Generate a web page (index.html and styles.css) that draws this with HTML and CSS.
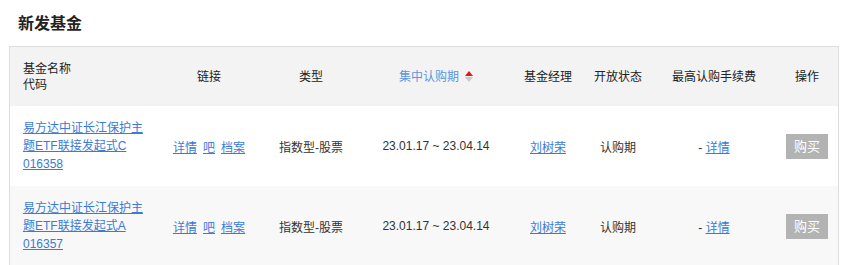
FILE: index.html
```html
<!DOCTYPE html>
<html lang="zh-CN">
<head>
<meta charset="utf-8">
<title>新发基金</title>
<link rel="stylesheet" href="styles.css">
</head>
<body>
<div class="page">
  <h2 class="title">新发基金</h2>
  <div class="table-wrap">
    <table class="fund-table">
      <colgroup>
        <col class="c1"><col class="c2"><col class="c3"><col class="c4">
        <col class="c5"><col class="c6"><col class="c7"><col class="c8">
      </colgroup>
      <thead>
        <tr>
          <th class="name">基金名称<br>代码</th>
          <th>链接</th>
          <th>类型</th>
          <th class="sorted"><span class="sort-label">集中认购期</span><span class="sort-arrows"><i class="up"></i><i class="down"></i></span></th>
          <th>基金经理</th>
          <th>开放状态</th>
          <th>最高认购手续费</th>
          <th>操作</th>
        </tr>
      </thead>
      <tbody>
        <tr>
          <td class="name"><a href="#">易方达中证长江保护主题ETF联接发起式C</a><br><a href="#">016358</a></td>
          <td class="links"><a href="#">详情</a><a href="#">吧</a><a href="#">档案</a></td>
          <td>指数型-股票</td>
          <td>23.01.17 ~ 23.04.14</td>
          <td><a href="#">刘树荣</a></td>
          <td>认购期</td>
          <td>- <a href="#">详情</a></td>
          <td><span class="buy">购买</span></td>
        </tr>
        <tr class="alt">
          <td class="name"><a href="#">易方达中证长江保护主题ETF联接发起式A</a><br><a href="#">016357</a></td>
          <td class="links"><a href="#">详情</a><a href="#">吧</a><a href="#">档案</a></td>
          <td>指数型-股票</td>
          <td>23.01.17 ~ 23.04.14</td>
          <td><a href="#">刘树荣</a></td>
          <td>认购期</td>
          <td>- <a href="#">详情</a></td>
          <td><span class="buy">购买</span></td>
        </tr>
      </tbody>
    </table>
  </div>
</div>
</body>
</html>
```

FILE: styles.css
```css
html, body {
  margin: 0;
  padding: 0;
  background: #fff;
}
body {
  font-family: "Liberation Sans", "Noto Sans CJK SC", sans-serif;
  font-size: 12px;
  color: #333;
}
.page {
  padding: 0 10px 0 9px;
}
.title {
  margin: 12px 0 10px 9px;
  font-size: 16px;
  line-height: 24px;
  font-weight: bold;
  color: #222;
}
.table-wrap {
  width: 828px;
  border: 1px solid #ddd;
}
.fund-table {
  width: 828px;
  table-layout: fixed;
  border-collapse: collapse;
  border-spacing: 0;
}
.c1 { width: 146px; }
.c2 { width: 106px; }
.c3 { width: 98px; }
.c4 { width: 152px; }
.c5 { width: 72px; }
.c6 { width: 68px; }
.c7 { width: 124px; }
.c8 { width: 62px; }

.fund-table th,
.fund-table td {
  padding: 0;
  text-align: center;
  vertical-align: middle;
  font-weight: normal;
}
.fund-table thead tr {
  background: #f3f3f3;
  height: 59px;
}
.fund-table th {
  line-height: 16px;
  color: #222;
}
.fund-table tbody tr {
  height: 80px;
  background: #fff;
}
.fund-table tbody tr.alt {
  background: #f8f8f8;
}
.fund-table .name {
  text-align: left;
  padding: 0 10px 0 13px;
}
.fund-table td.name {
  line-height: 18px;
}
a {
  color: #3a7bd5;
  text-decoration: underline;
}
.links a {
  margin: 0 3px;
}
.sorted .sort-label {
  color: #5f93dc;
}
.sort-arrows {
  display: inline-flex;
  flex-direction: column;
  vertical-align: middle;
  margin-left: 6px;
  gap: 1px;
  position: relative;
  top: -1px;
}
.sort-arrows i {
  display: block;
  width: 0;
  height: 0;
  border-left: 4px solid transparent;
  border-right: 4px solid transparent;
}
.sort-arrows .up {
  border-bottom: 5px solid #e8141c;
}
.sort-arrows .down {
  border-top: 5px solid #c8c8c8;
}
.buy {
  display: inline-block;
  width: 42px;
  height: 25px;
  line-height: 25px;
  background: #b3b3b3;
  color: #fff;
  font-size: 13px;
  text-align: center;
}
```
